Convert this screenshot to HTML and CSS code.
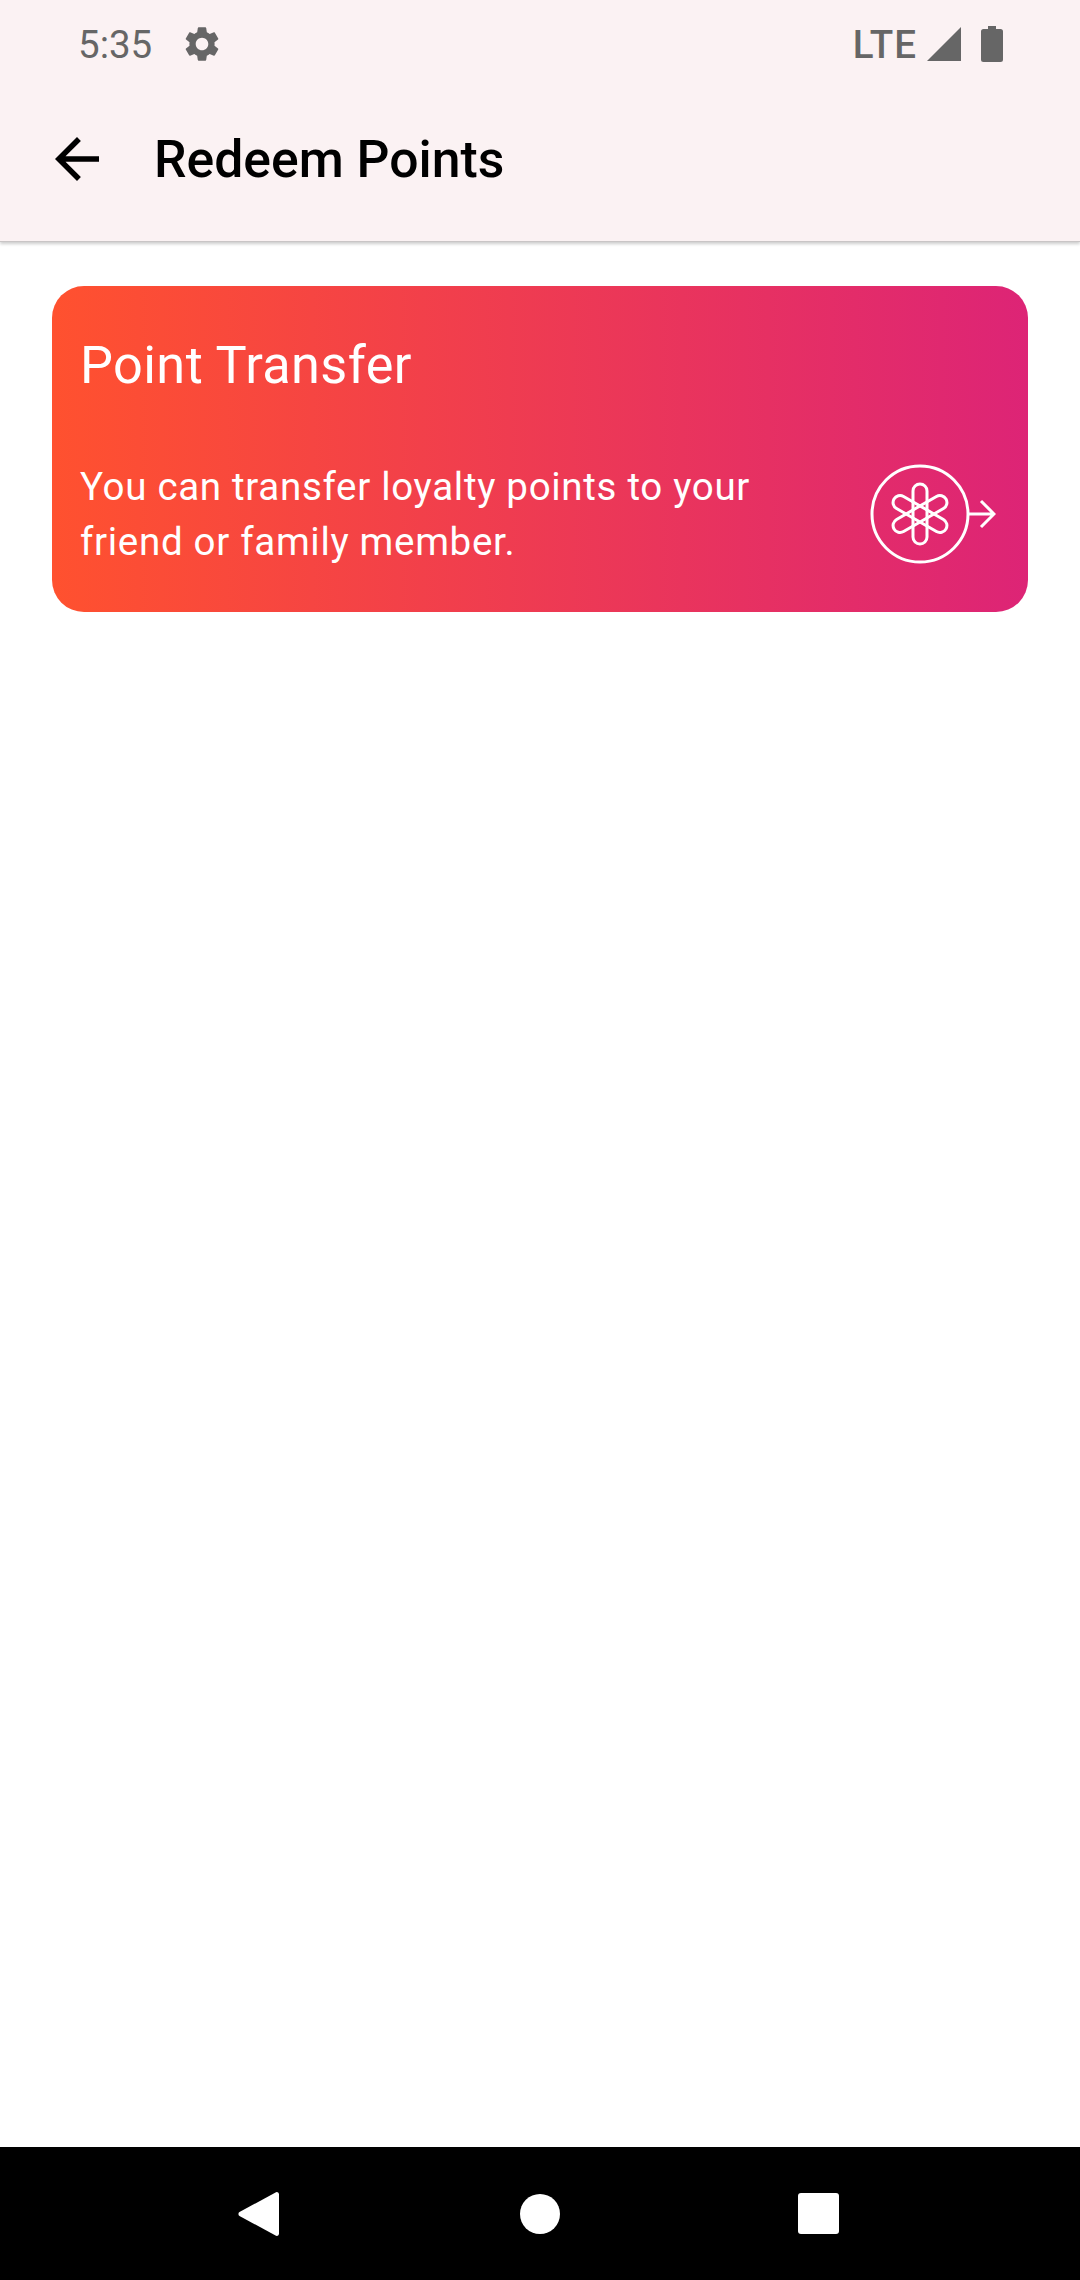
FILE: index.html
```html
<!DOCTYPE html>
<html lang="en">
<head>
    <meta charset="UTF-8">
    <meta name="viewport" content="width=device-width, initial-scale=1.0">
    <title>Redeem Points</title>
    <link rel="stylesheet" href="styles.css">
</head>
<body>
    <div class="screen">
        <header class="top-bar">
            <div class="status-bar">
                <div class="status-left">
                    <span class="clock">5:35</span>
                    <svg class="gear" viewBox="0 0 24 24"><path d="M19.14 12.94c.04-.3.06-.61.06-.94 0-.32-.02-.64-.07-.94l2.03-1.58c.18-.14.23-.41.12-.61l-1.92-3.32c-.12-.22-.37-.29-.59-.22l-2.39.96c-.5-.38-1.03-.7-1.62-.94l-.36-2.54c-.04-.24-.24-.41-.48-.41h-3.84c-.24 0-.43.17-.47.41l-.36 2.54c-.59.24-1.13.57-1.62.94l-2.39-.96c-.22-.08-.47 0-.59.22L2.74 8.87c-.12.21-.08.47.12.61l2.03 1.58c-.05.3-.09.63-.09.94s.02.64.07.94l-2.03 1.58c-.18.14-.23.41-.12.61l1.92 3.32c.12.22.37.29.59.22l2.39-.96c.5.38 1.03.7 1.62.94l.36 2.54c.05.24.24.41.48.41h3.84c.24 0 .44-.17.47-.41l.36-2.54c.59-.24 1.13-.56 1.62-.94l2.39.96c.22.08.47 0 .59-.22l1.92-3.32c.12-.22.07-.47-.12-.61l-2.01-1.58zM12 15.6c-1.98 0-3.6-1.62-3.6-3.6s1.62-3.6 3.6-3.6 3.6 1.62 3.6 3.6-1.62 3.6-3.6 3.6z"/></svg>
                </div>
                <div class="status-right">
                    <span class="network">LTE</span>
                    <svg class="signal" viewBox="0 0 34 34"><path d="M34 0V34H0z"/></svg>
                    <svg class="battery" viewBox="0 0 22 36"><path d="M7 0h8v3h4.500A2.500 2.500 0 0 1 22 5.500V33.500A2.500 2.500 0 0 1 19.500 36H2.500A2.500 2.500 0 0 1 0 33.500V5.500A2.500 2.500 0 0 1 2.500 3H7z"/></svg>
                </div>
            </div>
            <div class="app-bar">
                <svg class="back" viewBox="0 0 24 24"><path d="M20 11H7.830l5.590-5.590L12 4l-8 8 8 8 1.410-1.410L7.830 13H20z"/></svg>
                <h1 class="page-title">Redeem Points</h1>
            </div>
        </header>

        <main class="content">
            <div class="transfer-card">
                <h2 class="card-title">Point Transfer</h2>
                <div class="card-row">
                    <p class="card-text">You can transfer loyalty points to your friend or family member.</p>
                    <svg class="card-icon" viewBox="0 0 126 100" fill="none" stroke="#fff" stroke-width="3">
                        <circle cx="50" cy="50" r="48"/>
                        <rect x="43" y="20" width="14" height="60" rx="7"/>
                        <rect x="43" y="20" width="14" height="60" rx="7" transform="rotate(60 50 50)"/>
                        <rect x="43" y="20" width="14" height="60" rx="7" transform="rotate(120 50 50)"/>
                        <path d="M98 50h26M111 37l13 13-13 13"/>
                    </svg>
                </div>
            </div>
        </main>

        <nav class="nav-bar">
            <svg class="nav-back" viewBox="0 0 42 46"><path d="M38 1.200 1.500 21a2.400 2.400 0 0 0 0 4L38 44.800A2.500 2.500 0 0 0 41 43V3a2.500 2.500 0 0 0-3-1.800z"/></svg>
            <span class="nav-home"></span>
            <span class="nav-recent"></span>
        </nav>
    </div>
</body>
</html>
```

FILE: styles.css
```css
* {
    margin: 0;
    padding: 0;
    box-sizing: border-box;
}
body {
    width: 1080px;
    height: 2280px;
    background: #fff;
    font-family: Roboto, "Liberation Sans", sans-serif;
    overflow: hidden;
}
.screen {
    height: 2280px;
    display: flex;
    flex-direction: column;
}

/* status bar + app bar */
.top-bar {
    height: 242px;
    background: #fbf2f3;
    border-bottom: 1px solid #c9c5c6;
    box-shadow: 0 2px 3px rgba(0, 0, 0, 0.2);
}
.status-bar {
    height: 88px;
    padding: 0 77px 0 78px;
    display: flex;
    align-items: center;
    justify-content: space-between;
    fill: #666;
    color: #666;
}
.status-left, .status-right {
    display: flex;
    align-items: center;
}
.clock {
    font-size: 38.5px;
}
.gear {
    width: 42px;
    height: 42px;
    margin-left: 29px;
}
.network {
    font-size: 38.5px;
    font-weight: 500;
    letter-spacing: 1px;
}
.signal {
    width: 34px;
    height: 34px;
    margin-left: 10px;
}
.battery {
    width: 22px;
    height: 36px;
    margin-left: 20px;
}
.app-bar {
    height: 141px;
    padding: 0 0 0 44px;
    display: flex;
    align-items: center;
}
.back {
    width: 66px;
    height: 66px;
}
.page-title {
    margin: 2px 0 0 44px;
    font-size: 51.7px;
    font-weight: 500;
    color: #000;
}

/* card */
.content {
    flex: 1;
    padding: 44px 52px 0;
}
.transfer-card {
    height: 326px;
    padding: 48px 32px 0 28px;
    border-radius: 32px;
    color: #fff;
    background: linear-gradient(to right, #ff512f, #dd2476);
}
.card-title {
    font-size: 52.25px;
    font-weight: 400;
    line-height: 64px;
    letter-spacing: 0.41px;
}
.card-row {
    margin-top: 61px;
    display: flex;
    align-items: center;
    justify-content: space-between;
}
.card-text {
    width: 700px;
    font-size: 38.5px;
    line-height: 55px;
    letter-spacing: 0.69px;
}
.card-icon {
    width: 126px;
    height: 100px;
}

/* bottom navigation */
.nav-bar {
    height: 133px;
    background: #000;
    padding: 0 241px 0 238px;
    display: flex;
    align-items: center;
    justify-content: space-between;
    fill: #fff;
}
.nav-back {
    width: 42px;
    height: 46px;
}
.nav-home {
    width: 40px;
    height: 40px;
    margin-left: 1px;
    border-radius: 50%;
    background: #fff;
}
.nav-recent {
    width: 41px;
    height: 41px;
    border-radius: 3px;
    background: #fff;
}
```
